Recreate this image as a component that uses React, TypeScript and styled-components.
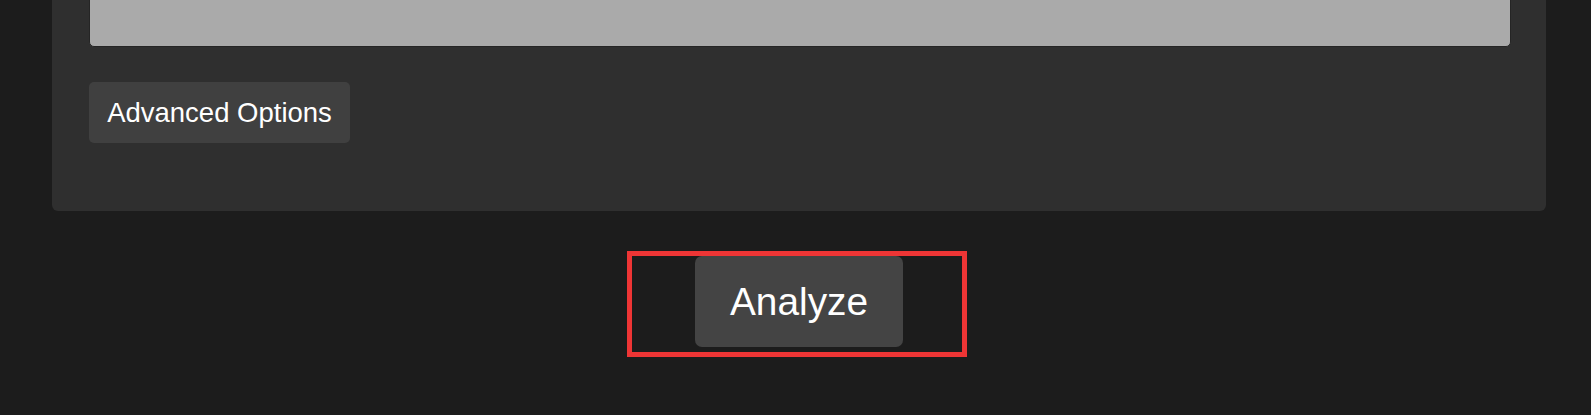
import React from "react";
import styled, { createGlobalStyle } from "styled-components";

const Global = createGlobalStyle`
  html {
    overflow: hidden;
    background: #1c1c1c;
  }
  body {
    margin: 0;
    padding: 0;
    background: #1c1c1c;
    font-family: "Liberation Sans", Arial, sans-serif;
  }
`;

const Page = styled.div`
  padding: 0 45px 60px 52px;
  margin-top: -201px;
`;

const Card = styled.section`
  background: #2f2f2f;
  border-radius: 6px;
  padding: 36px 35px 68px 37px;
`;

const TextArea = styled.div`
  box-sizing: border-box;
  height: 212px;
  background: #aaaaaa;
  border: 1px solid #252525;
  border-radius: 5px;
`;

const Button = styled.button<{ $size: "md" | "lg" }>`
  box-sizing: border-box;
  display: inline-flex;
  align-items: center;
  justify-content: center;
  border: none;
  border-radius: ${(p) => (p.$size === "lg" ? "7px" : "5px")};
  background: ${(p) => (p.$size === "lg" ? "#444444" : "#404040")};
  color: #ffffff;
  font-family: "Liberation Sans", Arial, sans-serif;
  font-size: ${(p) => (p.$size === "lg" ? "38.8px" : "27.5px")};
  width: ${(p) => (p.$size === "lg" ? "208px" : "261px")};
  height: ${(p) => (p.$size === "lg" ? "91px" : "61px")};
  padding: 0;
  cursor: pointer;
`;

const OptionsRow = styled.div`
  margin-top: 35px;
  display: flex;
`;

const ActionRow = styled.div`
  margin-top: 45px;
  display: flex;
  justify-content: center;
`;

const Highlight = styled.div`
  position: relative;
  display: inline-flex;
`;

const HighlightBox = styled.span`
  position: absolute;
  left: -68px;
  top: -5px;
  width: 340px;
  height: 106px;
  box-sizing: border-box;
  border: 5px solid #ee3535;
  pointer-events: none;
`;

export default function App() {
  return (
    <>
      <Global />
      <Page>
        <Card>
          <TextArea />
          <OptionsRow>
            <Button $size="md">Advanced Options</Button>
          </OptionsRow>
        </Card>
        <ActionRow>
          <Highlight>
            <Button $size="lg">Analyze</Button>
            <HighlightBox />
          </Highlight>
        </ActionRow>
      </Page>
    </>
  );
}
